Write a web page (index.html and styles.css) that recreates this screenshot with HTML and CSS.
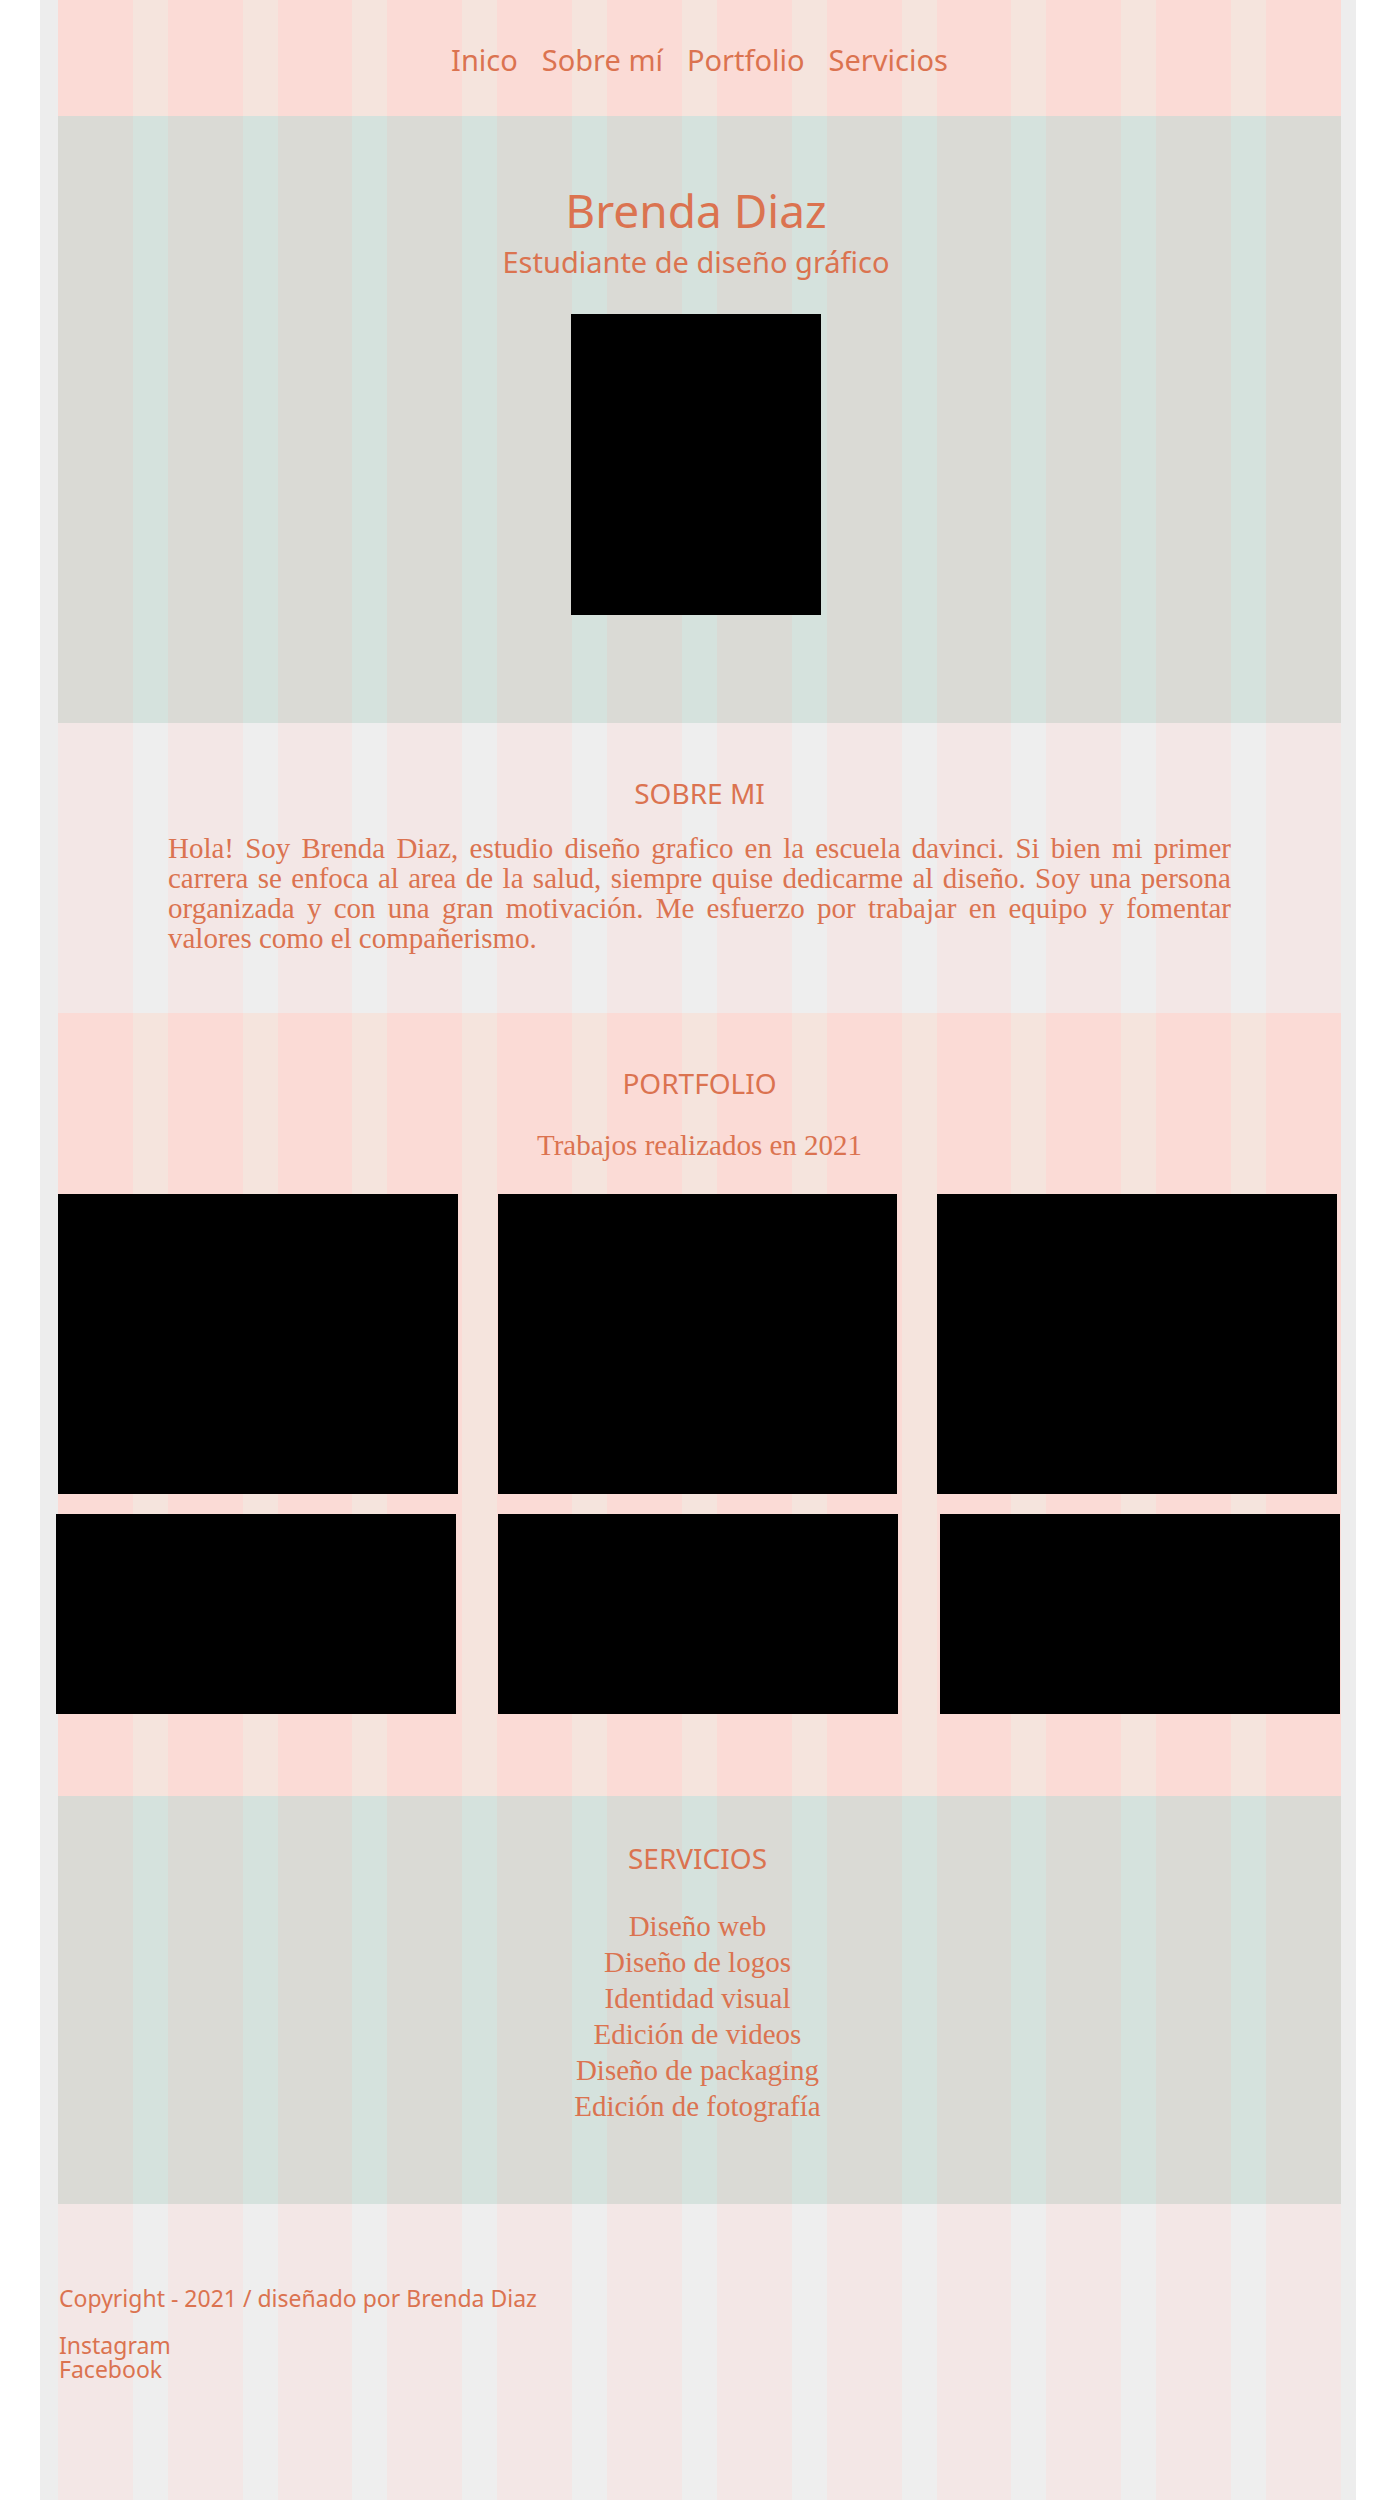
FILE: index.html
```html
<!DOCTYPE html>
<html lang="es">
<head>
<meta charset="utf-8">
<meta name="viewport" content="width=device-width, initial-scale=1">
<title>Brenda Diaz</title>
<link rel="stylesheet" href="styles.css">
</head>
<body>
<div class="page">
  <header class="band band-pink">
    <nav class="menu">
      <a href="#inicio">Inico</a>
      <a href="#sobre-mi">Sobre mí</a>
      <a href="#portfolio">Portfolio</a>
      <a href="#servicios">Servicios</a>
    </nav>
  </header>
  <main>
    <section class="band band-green hero" id="inicio">
      <h1 class="name">Brenda Diaz</h1>
      <p class="role">Estudiante de diseño gráfico</p>
      <div class="portrait" role="img" aria-label="Retrato"></div>
    </section>
    <section class="band about" id="sobre-mi">
      <h2 class="title">SOBRE MI</h2>
      <p class="bio">Hola! Soy Brenda Diaz, estudio diseño grafico en la escuela davinci. Si bien mi primer carrera se enfoca al area de la salud, siempre quise dedicarme al diseño. Soy una persona organizada y con una gran motivación. Me esfuerzo por trabajar en equipo y fomentar valores como el compañerismo.</p>
    </section>
    <section class="band band-pink portfolio" id="portfolio">
      <h2 class="title">PORTFOLIO</h2>
      <p class="caption">Trabajos realizados en 2021</p>
      <div class="works works-tall">
        <div class="work"></div>
        <div class="work"></div>
        <div class="work"></div>
      </div>
      <div class="works works-short">
        <div class="work"></div>
        <div class="work"></div>
        <div class="work"></div>
      </div>
    </section>
    <section class="band band-green services" id="servicios">
      <h2 class="title">SERVICIOS</h2>
      <ul class="service-list">
        <li>Diseño web</li>
        <li>Diseño de logos</li>
        <li>Identidad visual</li>
        <li>Edición de videos</li>
        <li>Diseño de packaging</li>
        <li>Edición de fotografía</li>
      </ul>
    </section>
  </main>
  <footer class="band footer">
    <p class="copyright">Copyright - 2021 / diseñado por Brenda Diaz</p>
    <a href="#instagram">Instagram</a>
    <a href="#facebook">Facebook</a>
  </footer>
</div>
</body>
</html>
```
FILE: styles.css
```css
* {
  box-sizing: border-box;
}

body {
  margin: 0;
  background: #ffffff;
  color: #db7350;
  font-family: "Noto Sans", "Open Sans", sans-serif;
  font-size: 23px;
}

h1, h2, p, ul {
  margin: 0;
  padding: 0;
  font-weight: 400;
}

a {
  color: inherit;
  text-decoration: none;
}

.page {
  display: flex;
  flex-direction: column;
  min-height: 100vh;
  margin: 0 44px 0 40px;
  padding: 0 15px 0 18px;
  background: #ededed;
}

/* Twelve-column guide drawn behind each band */
.band {
  --column: #f3e7e6;
  --gutter: #eeeeee;
  background: repeating-linear-gradient(
    90deg,
    var(--column) 0 calc((100% - 385px) / 12),
    var(--gutter) 0 calc((100% + 35px) / 12)
  );
}

.band-pink {
  --column: #fbdbd6;
  --gutter: #f5e4dd;
}

.band-green {
  --column: #dadad5;
  --gutter: #d5e2dd;
}

.menu {
  display: flex;
  flex-wrap: wrap;
  justify-content: center;
  gap: 0 24px;
  padding: 40px 0 36px;
  font-size: 29px;
  line-height: 40px;
}

.hero {
  display: flex;
  flex-direction: column;
  align-items: center;
  padding: 64px 7px 108px 0;
}

.name {
  font-size: 46px;
  line-height: 60px;
}

.role {
  margin: 2px 0 32px;
  font-size: 29px;
  line-height: 40px;
}

.portrait {
  width: 250px;
  height: 301px;
  background: #000000;
}

.title {
  font-size: 28px;
  line-height: 40px;
  text-align: center;
}

.about {
  padding: 50px 110px 60px;
}

.bio, .caption, .service-list {
  font-family: "Liberation Serif", serif;
  font-size: 29px;
}

.bio {
  margin-top: 20px;
  line-height: 30px;
  text-align: justify;
}

.portfolio {
  padding: 50px 0 82px;
}

.caption {
  margin: 22px 0 29px;
  line-height: 40px;
  text-align: center;
}

.works {
  display: flex;
}

.works-tall {
  gap: 40px;
  padding-right: 4px;
}

.works-short {
  gap: 42px;
  margin: 20px 1px 0 -2px;
}

.work {
  flex: 1;
  height: 300px;
  background: #000000;
}

.works-short .work {
  height: 200px;
}

.services {
  padding: 42px 4px 80px 0;
  text-align: center;
}

.service-list {
  margin-top: 30px;
  line-height: 36px;
  list-style: none;
}

.footer {
  display: flex;
  flex: 1;
  flex-direction: column;
  align-items: flex-start;
  padding: 82px 0 84px 1px;
  line-height: 24px;
}

.copyright {
  margin-bottom: 23px;
}
```
